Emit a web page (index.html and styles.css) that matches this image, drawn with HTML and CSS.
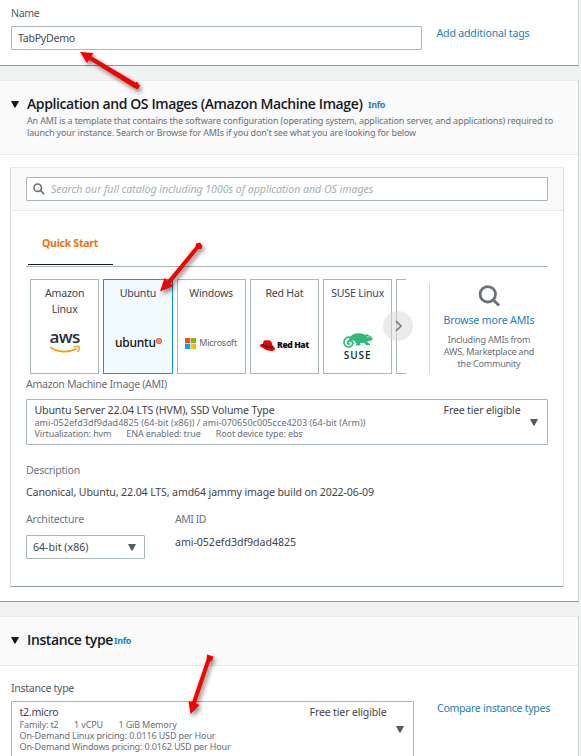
FILE: index.html
```
<!DOCTYPE html>
<html lang="en">
<head>
<meta charset="utf-8">
<title>Launch an instance</title>
<link rel="stylesheet" href="styles.css">
</head>
<body>
<section class="panel name-panel">
  <div class="name-col">
    <div class="label name-label">Name</div>
    <div class="input name-input">TabPyDemo</div>
  </div>
  <a class="link tags-link">Add additional tags</a>
</section>

<section class="panel ami-panel">
  <header class="head ami-head">
    <div class="title-row"><svg class="caret" viewBox="0 0 8 7"><path d="M0 0h8L4.6 6.6h-1.200z"/></svg><h2 class="ami-title">Application and OS Images (Amazon Machine Image)</h2><a class="info">Info</a></div>
    <p class="desc desc-one">An AMI is a template that contains the software configuration (operating system, application server, and applications) required to</p>
    <p class="desc desc-two">launch your instance. Search or Browse for AMIs if you don't see what you are looking for below</p>
  </header>
  <div class="card">
    <div class="search-head">
      <div class="input search"><svg viewBox="0 0 12 12"><circle cx="4.700" cy="4.700" r="3.700"/><path d="M7.400 7.400l3.700 3.700"/></svg><span>Search our full catalog including 1000s of application and OS images</span></div>
    </div>
    <div class="body">
      <div class="tabs"><div class="tab"><span>Quick Start</span></div></div>
      <div class="catalog">
        <div class="tiles">
          <div class="tile"><div class="tile-name">Amazon<br>Linux</div>
            <div class="logo aws"><span>aws</span><svg viewBox="0 0 32 9"><path d="M1.500 2.200C9 7.600 19 8 27.300 3.800" class="smile"/><path d="M24.500 2.200c2-1 4.500-1.300 5.800-.4.4 1.500-.3 3.700-1.700 5.200" class="smile tip"/></svg></div></div>
          <div class="tile selected"><div class="tile-name">Ubuntu</div>
            <div class="logo ubuntu"><span>ubuntu</span><svg viewBox="0 0 6 6"><circle cx="3" cy="3" r="3" fill="#e95420"/><circle cx="3" cy="3" r="1.400" fill="none" stroke="#fff" stroke-width=".6"/></svg></div></div>
          <div class="tile"><div class="tile-name">Windows</div>
            <div class="logo microsoft"><svg viewBox="0 0 11 11"><path fill="#f25022" d="M0 0h5.200v5.200H0z"/><path fill="#7fba00" d="M5.800 0H11v5.200H5.800z"/><path fill="#00a4ef" d="M0 5.800h5.200V11H0z"/><path fill="#ffb900" d="M5.800 5.800H11V11H5.800z"/></svg><span>Microsoft</span></div></div>
          <div class="tile"><div class="tile-name">Red Hat</div>
            <div class="logo redhat"><svg viewBox="0 0 15 11"><path fill="#e00" d="M3.600 1C4.200 0 5.200 0 6.500.5c1-.7 3.800-.3 4.800 1.100l1.300 4.100C14.500 7 15.500 8.600 14.500 9.900c-2 2-7.500.8-10.500-1.200C1.500 7.500-.3 6.200.1 4.900.5 4 1.700 3.900 2.900 4z"/><path d="M2.800 4.200C4 6.600 9.500 8.500 12.700 6.600" fill="none" stroke="#111" stroke-width="1.200"/></svg><span>Red Hat</span></div></div>
          <div class="tile"><div class="tile-name">SUSE Linux</div>
            <div class="logo suse"><svg viewBox="0 0 30 15"><path fill="#30ba78" d="M7 4C9 1 14-.5 19 .8c2 .4 3 .9 4 1.300L24 1l1.500 1.200c2 .5 3.500 1.900 4 3.500-.2 1.600-1.500 2.100-3.500 2.200-1.500 0-2 .6-1.200 1.900l2.200 1.200v1.200h-3.800L21.400 9.800l-4.400.1.700 1.800-1.700.7h-3.500l1-1.700-1.400-2.500C10 7 7.500 8 5.500 7.500z"/><path d="M8 4.500C3.500 3 1 6 1 9c0 3 2 5 4.500 5S10 12.300 9.800 10.200C9.500 7.500 5 7.200 4.500 9.400c-.3 1.800 2 2.300 2.500 1" fill="none" stroke="#30ba78" stroke-width="1.700"/><path d="M23.500 4.200c1.300-1.400 3-.6 3.300.7" fill="none" stroke="#fff" stroke-width=".7"/></svg><span>SUSE</span></div></div>
          <div class="tile cut"></div>
          <div class="next"><svg viewBox="0 0 8 12"><path d="M1 1l5 5-5 5"/></svg></div>
        </div>
        <div class="browse">
          <svg viewBox="0 0 22 22"><circle cx="9.300" cy="9.300" r="7.700"/><path d="M14.500 14.500l6 6"/></svg>
          <a class="link browse-link">Browse more AMIs</a>
          <p>Including AMIs from<br>AWS, Marketplace and<br>the Community</p>
        </div>
      </div>
      <div class="label ami-label">Amazon Machine Image (AMI)</div>
      <div class="select ami-select">
        <div class="option">
          <div class="option-name server">Ubuntu Server 22.04 LTS (HVM), SSD Volume Type</div>
          <div class="meta ids">ami-052efd3df9dad4825 (64-bit (x86)) / ami-070650c005cce4203 (64-bit (Arm))</div>
          <div class="meta flags"><span>Virtualization: hvm</span><span>ENA enabled: true</span><span>Root device type: ebs</span></div>
        </div>
        <div class="tier">Free tier eligible</div>
        <svg class="caret" viewBox="0 0 8 7"><path d="M0 0h8L4.600 6.600h-1.200z"/></svg>
      </div>
      <div class="label muted desc-label">Description</div>
      <div class="value canonical">Canonical, Ubuntu, 22.04 LTS, amd64 jammy image build on 2022-06-09</div>
      <div class="pair">
        <div>
          <div class="label muted arch-label">Architecture</div>
          <div class="input arch"><span>64-bit (x86)</span><svg class="caret" viewBox="0 0 8 7"><path d="M0 0h8L4.600 6.600h-1.200z"/></svg></div>
        </div>
        <div>
          <div class="label muted id-label">AMI ID</div>
          <div class="value ami-id">ami-052efd3df9dad4825</div>
        </div>
      </div>
    </div>
  </div>
</section>

<section class="panel type-panel">
  <header class="head type-head">
    <div class="title-row"><svg class="caret" viewBox="0 0 8 7"><path d="M0 0h8L4.600 6.600h-1.200z"/></svg><h2 class="type-title">Instance type</h2><a class="info">Info</a></div>
  </header>
  <div class="type-body">
    <div>
      <div class="label type-label">Instance type</div>
      <div class="select type-select">
        <div class="option">
          <div class="option-name micro">t2.micro</div>
          <div class="meta spec"><span>Family: t2</span><span>1 vCPU</span><span>1 GiB Memory</span></div>
          <div class="meta">On-Demand Linux pricing: 0.0116 USD per Hour</div>
          <div class="meta">On-Demand Windows pricing: 0.0162 USD per Hour</div>
        </div>
        <div class="tier">Free tier eligible</div>
        <svg class="caret" viewBox="0 0 8 7"><path d="M0 0h8L4.600 6.600h-1.200z"/></svg>
      </div>
    </div>
    <a class="link compare-link">Compare instance types</a>
  </div>
</section>

<svg class="arrows" viewBox="0 0 581 756">
  <g><path d="M80 52L93.500 53L91.500 56.200L135.500 82.500L137 81.500L140 86L137.500 89.500L133.500 87.500L89.200 59.800L87 63z"/></g>
  <g><path d="M160 291.500L164.500 278L167.500 280.500L195.500 246.500L196 243.500L200 242.500L202.500 246L201 249L198.500 249L170.800 283.500L173.500 286z"/></g>
  <g><path d="M190.500 714L188.500 701L192 702L206.500 659.500L207 654.500L213.500 656.500L212 661L210 661.500L196 703.500L199.500 705z"/></g>
</svg>
</body>
</html>
```
FILE: styles.css
```
* { box-sizing: border-box; }
body {
  margin: 0;
  position: relative;
  width: 581px;
  height: 756px;
  overflow: hidden;
  background: #f1f3f3;
  color: #3f444b;
  font: 10.6px/16px "Noto Sans", "Open Sans", sans-serif;
  white-space: nowrap;
}
h2, p { margin: 0; }
svg { display: block; flex: none; }

.panel {
  width: 579px;
  background: #fff;
  border-right: 1px solid #d0d6d6;
  border-bottom: 1px solid #8f9696;
}
.head { background: #fafafa; border-top: 1px solid #e6eaea; border-bottom: 1px solid #e6eaea; }
.link { color: #1a80c0; }
.label { color: #545b64; }
.muted { color: #6d757e; }
.input { border: 1px solid #aab7b8; border-radius: 1px; height: 24px; background: #fff; line-height: 22px; }
.caret { width: 8px; height: 7px; fill: #545b64; }

.name-panel { display: flex; height: 66px; }
.name-col { width: 411px; margin-left: 11px; padding-top: 5px; }
.name-label { letter-spacing: -0.4px; }
.name-input { margin-top: 5px; padding-left: 6px; letter-spacing: -0.26px; color: #444950; }
.tags-link { margin: 25px 0 0 14.5px; letter-spacing: -0.19px; }

.ami-panel { margin-top: 14px; height: 522px; }
.ami-head { height: 75px; padding-top: 13px; }
.title-row { display: flex; align-items: center; height: 20px; padding-left: 11px; }
.title-row .caret { fill: #16191f; margin-right: 8px; }
h2 { font: 600 14px/20px "Open Sans", "Noto Sans", sans-serif; color: #16191f; flex: none; margin-top: -1px; }
.ami-title { letter-spacing: -0.39px; width: 341px; }
.type-title { letter-spacing: -0.39px; width: 87px; }
.info { font-size: 9px; font-weight: 700; letter-spacing: -0.36px; color: #1a80c0; padding-top: 2px; }
.desc { font-size: 9px; line-height: 12px; padding-left: 27px; color: #687078; }
.desc-one { padding-top: 1px; letter-spacing: -0.136px; }
.desc-two { letter-spacing: -0.158px; }

.card {
  margin: 12px 0 0 10px;
  width: 554px;
  height: 420px;
  border: 1px solid #d5dbdb;
  border-top-color: #eaeded;
  border-bottom-color: #8f9f9f;
  border-radius: 1px;
}
.search-head { height: 43px; padding: 9px 15px 0; background: #fafafa; border-bottom: 1px solid #e6eaea; }
.search { display: flex; align-items: center; padding-left: 6px; color: #a3b0b2; font-style: italic; letter-spacing: -0.035px; }
.search svg { width: 12px; height: 12px; margin-right: 6px; fill: none; stroke: #687078; stroke-width: 1.6; }
.body { padding: 0 15px; }
.tabs { height: 56px; border-bottom: 1px solid #aab7b8; }
.tab { width: 85px; height: 54px; margin-left: 2px; padding: 24px 0 0 14px; border-bottom: 1px solid #16191f; color: #ec7211; font-weight: 700; letter-spacing: -0.31px; }
.catalog { display: flex; height: 95px; margin-top: 12px; }
.tiles { position: relative; display: flex; gap: 4px; width: 376px; padding-left: 4px; }
.tile { flex: none; width: 69.25px; height: 95px; border: 1px solid #aab7b8; text-align: center; padding-top: 5px; letter-spacing: -0.22px; position: relative; }
.selected { background: #f1faff; border-color: #00a1c9; }
.tile.cut { width: 10px; border-right: 0; }
.next { position: absolute; left: 357px; top: 32px; width: 30px; height: 30px; border-radius: 50%; background: rgba(215,215,215,.5); padding: 9px 0 0 12px; }
.next svg { width: 8px; height: 12px; fill: none; stroke: #777; stroke-width: 1.6; }
.logo { position: absolute; inset: 50px 0 auto 0; display: flex; justify-content: center; align-items: center; color: #111; }
.aws { flex-direction: column; top: 49px; }
.aws span { font: 600 17px/15px "Open Sans", sans-serif; letter-spacing: -0.6px; color: #252f3e; }
.aws svg { width: 32px; height: 9px; margin-top: 1px; }
.smile { fill: none; stroke: #f90; stroke-width: 1.7; }
.tip { stroke-width: 1.2; }
.ubuntu { top: 55px; align-items: flex-start; padding-left: 1px; }
.ubuntu span { font: 500 12px/16px "Noto Sans", sans-serif; letter-spacing: -0.25px; }
.ubuntu svg { width: 6px; height: 6px; margin-top: 3px; }
.microsoft { top: 56px; height: 14px; gap: 3px; }
.microsoft svg { width: 11px; height: 11px; }
.microsoft span { font-size: 9px; letter-spacing: -0.25px; color: #666; }
.redhat { top: 58px; height: 14px; gap: 2px; }
.redhat svg { width: 15px; height: 11px; }
.redhat span { font: 800 8.6px/14px "Open Sans", sans-serif; letter-spacing: -0.45px; }
.suse { top: 53px; flex-direction: column; }
.suse svg { width: 30px; height: 15px; }
.suse span { font: 600 10px/10px "Open Sans", sans-serif; letter-spacing: 0.9px; color: #0c322c; margin-top: 2px; }
.browse { width: 119px; height: 91px; margin: 4px 0 0 27px; border-left: 1px solid #d5dbdb; display: flex; flex-direction: column; align-items: center; padding-top: 2px; }
.browse svg { width: 23px; height: 22px; fill: none; stroke: #687078; stroke-width: 2.8; }
.browse-link { margin-top: 5px; letter-spacing: -0.17px; }
.browse p { margin-top: 6px; font-size: 9px; line-height: 12px; text-align: center; letter-spacing: -0.2px; color: #687078; }

.ami-label { margin-top: 2px; letter-spacing: -0.33px; color: #687078; }
.select { display: flex; border: 1px solid #aab7b8; border-radius: 1px; background: #fff; }
.select .caret { margin-right: 9px; }
.ami-select { margin-top: 7px; height: 46px; padding-left: 7.5px; }
.option { flex: 1; }
.option-name { line-height: 14px; padding-top: 3px; height: 17px; color: #3f444b; }
.server { letter-spacing: -0.145px; }
.micro { letter-spacing: -0.26px; }
.meta { font-size: 9px; line-height: 11px; letter-spacing: -0.147px; color: #687078; }
.ids { letter-spacing: 0.045px; }
.flags, .spec { display: flex; gap: 15px; }
.flags { letter-spacing: -0.12px; }
.tier { padding-top: 3px; line-height: 14px; letter-spacing: -0.17px; margin-right: 9.5px; }
.ami-select .caret { margin-top: 19px; }
.desc-label { margin-top: 17px; letter-spacing: -0.28px; }
.value { color: #3f444b; }
.canonical { margin-top: 6px; letter-spacing: -0.13px; }
.pair { display: grid; grid-template-columns: 149px 1fr; margin-top: 11px; }
.arch-label { letter-spacing: -0.23px; }
.arch { display: flex; align-items: center; justify-content: space-between; width: 119px; margin-top: 8px; padding: 0 8px 0 6px; }
.id-label { letter-spacing: -0.52px; }
.ami-id { margin-top: 7px; letter-spacing: -0.04px; }

.type-panel { margin-top: 14px; height: 160px; }
.type-head { height: 50px; padding-top: 13px; }
.type-body { display: flex; padding: 14px 0 0 11px; }
.type-label { letter-spacing: -0.31px; }
.type-select { width: 403px; height: 70px; margin-top: 5px; padding-left: 7.5px; }
.type-select .caret { margin-top: 24px; }
.type-select .spec { gap: 15.5px; }
.compare-link { margin: 20px 0 0 23px; letter-spacing: -0.3px; }

.arrows { position: absolute; left: 0; top: 0; width: 581px; height: 756px; pointer-events: none; fill: #f60000; }
.arrows g { filter: drop-shadow(2px 3px 2px rgba(0,0,0,.45)); }
```
